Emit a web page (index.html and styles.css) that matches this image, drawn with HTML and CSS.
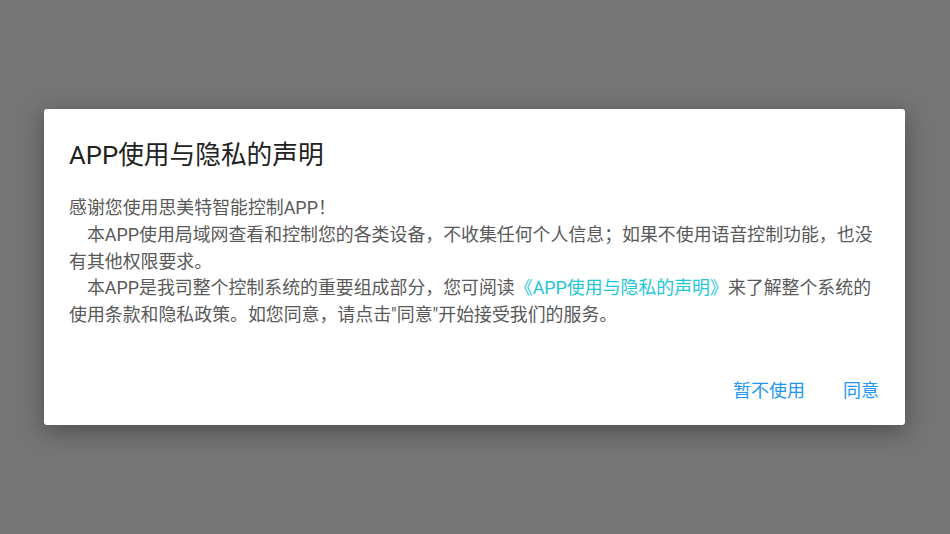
FILE: index.html
```html
<!DOCTYPE html>
<html lang="zh-CN">
<head>
<meta charset="utf-8">
<link rel="stylesheet" href="styles.css">
</head>
<body>
<div class="overlay">
  <div class="dialog">
    <h1 class="title">APP使用与隐私的声明</h1>
    <div class="content">
      <p class="line">感谢您使用思美特智能控制APP！</p>
      <p class="para">本APP使用局域网查看和控制您的各类设备，不收集任何个人信息；如果不使用语音控制功能，也没有其他权限要求。</p>
      <p class="para">本APP是我司整个控制系统的重要组成部分，您可阅读<span class="link">《APP使用与隐私的声明》</span>来了解整个系统的使用条款和隐私政策。如您同意，请点击"同意"开始接受我们的服务。</p>
    </div>
    <div class="actions">
      <span class="btn">暂不使用</span>
      <span class="btn">同意</span>
    </div>
  </div>
</div>
</body>
</html>
```
FILE: styles.css
```css
html, body {
  margin: 0;
  padding: 0;
  height: 100%;
}
body {
  background: #757575;
  font-family: Roboto, "Noto Sans CJK SC", sans-serif;
}
.overlay {
  height: 534px;
  display: flex;
  align-items: center;
  justify-content: center;
}
.dialog {
  width: 861px;
  margin-left: -1px;
  background: #ffffff;
  border-radius: 3px;
  box-shadow: 0 6px 24px rgba(0,0,0,0.35);
  padding: 30px 24px 16px 25px;
  box-sizing: border-box;
}
.title {
  margin: 0;
  font-size: 25.7px;
  line-height: 32px;
  font-weight: 400;
  color: #212121;
}
.content {
  margin-top: 24px;
  font-size: 17.9px;
  line-height: 26.7px;
  color: #595959;
}
.content p {
  margin: 0;
}
.para {
  text-indent: 1em;
}
.link {
  color: #1ec6d8;
}
.actions {
  margin-top: 44px;
  margin-right: -6px;
  display: flex;
  justify-content: flex-end;
  gap: 22px;
}
.btn {
  font-size: 18px;
  line-height: 36px;
  padding: 0 8px;
  color: #2196f3;
}
```
